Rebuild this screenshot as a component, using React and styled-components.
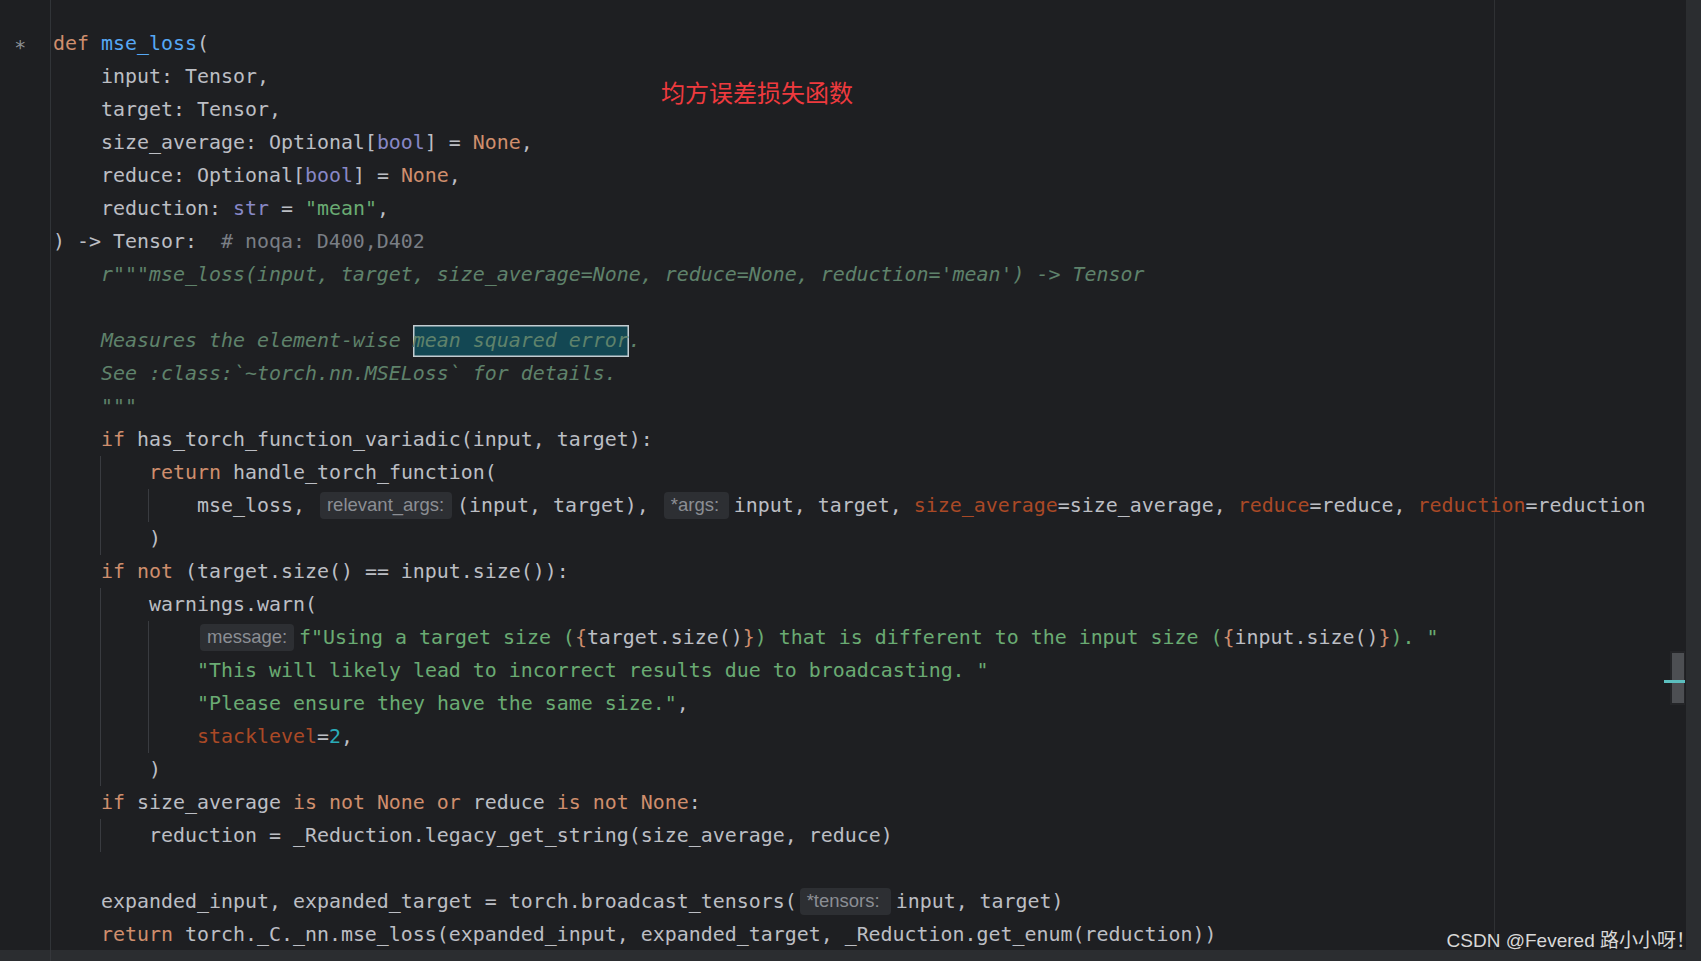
import styled, { createGlobalStyle } from 'styled-components';

const palette = {
  text: '#bcbec4',
  kw: '#cf8e6d',
  fn: '#56a8f5',
  str: '#6aab73',
  cm: '#7a7e85',
  doc: '#5f826b',
  bi: '#8888c6',
  prm: '#aa4926',
  num: '#2aacb8'
};

const CHAR = 12;

// token helpers
const t = (s, k = 'text') => ({ s, k });
const inlay = (label, w) => ({ inlay: label, w });
const L = (indent, ...tokens) => ({ type: 'line', indent, tokens });
const B = (col, ...items) => ({ type: 'block', col, items });

const code = [
  L(0, t('def', 'kw'), t(' '), t('mse_loss', 'fn'), t('(')),
  L(4, t('input: Tensor,')),
  L(4, t('target: Tensor,')),
  L(4, t('size_average: Optional['), t('bool', 'bi'), t('] = '), t('None', 'kw'), t(',')),
  L(4, t('reduce: Optional['), t('bool', 'bi'), t('] = '), t('None', 'kw'), t(',')),
  L(4, t('reduction: '), t('str', 'bi'), t(' = '), t('"mean"', 'str'), t(',')),
  L(0, t(') -> Tensor:  '), t('# noqa: D400,D402', 'cm')),
  L(4, t(`r"""mse_loss(input, target, size_average=None, reduce=None, reduction='mean') -> Tensor`, 'doc')),
  L(4),
  L(4, t('Measures the element-wise ', 'doc'), { hl: 'mean squared error' }, t('.', 'doc')),
  L(4, t('See :class:`~torch.nn.MSELoss` for details.', 'doc')),
  L(4, t('"""', 'doc')),
  L(4, t('if', 'kw'), t(' has_torch_function_variadic(input, target):')),
  B(4,
    L(8, t('return', 'kw'), t(' handle_torch_function(')),
    B(8,
      L(12,
        t('mse_loss, '),
        inlay('relevant_args:', 132),
        t('(input, target), '),
        inlay('*args:', 65),
        t('input, target, '),
        t('size_average', 'prm'), t('=size_average, '),
        t('reduce', 'prm'), t('=reduce, '),
        t('reduction', 'prm'), t('=reduction')
      )
    ),
    L(8, t(')'))
  ),
  L(4, t('if', 'kw'), t(' '), t('not', 'kw'), t(' (target.size() == input.size()):')),
  B(4,
    L(8, t('warnings.warn(')),
    B(8,
      L(12,
        inlay('message:', 94),
        t('f"Using a target size (', 'str'), t('{', 'kw'), t('target.size()'), t('}', 'kw'),
        t(') that is different to the input size (', 'str'), t('{', 'kw'), t('input.size()'), t('}', 'kw'),
        t('). "', 'str')
      ),
      L(12, t('"This will likely lead to incorrect results due to broadcasting. "', 'str')),
      L(12, t('"Please ensure they have the same size."', 'str'), t(',')),
      L(12, t('stacklevel', 'prm'), t('='), t('2', 'num'), t(','))
    ),
    L(8, t(')'))
  ),
  L(4,
    t('if', 'kw'), t(' size_average '), t('is not None', 'kw'), t(' '), t('or', 'kw'),
    t(' reduce '), t('is not None', 'kw'), t(':')
  ),
  B(4,
    L(8, t('reduction = _Reduction.legacy_get_string(size_average, reduce)'))
  ),
  L(4),
  L(4, t('expanded_input, expanded_target = torch.broadcast_tensors('), inlay('*tensors:', 91), t('input, target)')),
  L(4, t('return', 'kw'), t(' torch._C._nn.mse_loss(expanded_input, expanded_target, _Reduction.get_enum(reduction))'))
];

function Token({ tok }) {
  if (tok.inlay) return <Inlay $w={tok.w}>{tok.inlay}</Inlay>;
  if (tok.hl) return <Highlight>{tok.hl}</Highlight>;
  return <Tk $kind={tok.k}>{tok.s}</Tk>;
}

function Items({ items, base }) {
  return items.map((item, i) => {
    if (item.type === 'block') {
      return (
        <Guide key={i} $offset={(item.col - base) * CHAR - 1}>
          <Items items={item.items} base={item.col} />
        </Guide>
      );
    }
    return (
      <Line key={i} $pad={(item.indent - base) * CHAR}>
        {item.tokens.map((tok, j) => <Token key={j} tok={tok} />)}
      </Line>
    );
  });
}

export default function App() {
  return (
    <>
      <GlobalStyle />
      <Window>
        <Main>
          <Gutter>
            <GutterRow>∗</GutterRow>
          </Gutter>
          <Editor>
            <MarginLine />
            <Items items={code} base={0} />
            <Scrollbar>
              <Thumb />
              <Marker />
            </Scrollbar>
          </Editor>
          <SideStrip />
        </Main>
        <BottomBar>
          <BarGutter />
        </BottomBar>
        <Note>均方误差损失函数</Note>
        <Watermark>CSDN @Fevered 路小小呀！</Watermark>
      </Window>
    </>
  );
}

const GlobalStyle = createGlobalStyle`
  html, body {
    margin: 0;
    padding: 0;
    background: #1e1f22;
    overflow: hidden;
  }
`;

const Window = styled.div`
  position: relative;
  width: 1701px;
  height: 961px;
  display: flex;
  flex-direction: column;
  background: #1e1f22;
  overflow: hidden;
`;

const Main = styled.div`
  display: flex;
  height: 950px;
  overflow: hidden;
`;

const Gutter = styled.div`
  width: 50px;
  flex-shrink: 0;
  padding-top: 27px;
  border-right: 1px solid #313438;
`;

const GutterRow = styled.div`
  height: 33px;
  display: flex;
  align-items: center;
  padding-left: 14px;
  color: #8c8f94;
  font-family: "DejaVu Sans Mono", monospace;
  font-size: 20px;
`;

const Editor = styled.div`
  position: relative;
  z-index: 0;
  flex: 1;
  padding: 27px 0 0 2px;
  font-family: "DejaVu Sans Mono", "Liberation Mono", monospace;
  font-size: 19.93px;
  line-height: 33px;
  color: ${palette.text};
`;

const MarginLine = styled.div`
  position: absolute;
  z-index: -1;
  top: 0;
  bottom: 0;
  left: 1443px;
  width: 1px;
  background: #2f3134;
`;

const Line = styled.div`
  display: flex;
  align-items: center;
  height: 33px;
  padding-left: ${(p) => p.$pad}px;
  white-space: pre;
`;

const Guide = styled.div`
  margin-left: ${(p) => p.$offset}px;
  border-left: 1px solid #393b40;
`;

const Tk = styled.span`
  white-space: pre;
  color: ${(p) => palette[p.$kind]};
  font-style: ${(p) => (p.$kind === 'doc' ? 'italic' : 'normal')};
`;

const Highlight = styled.span`
  white-space: pre;
  height: 32px;
  line-height: 32px;
  color: ${palette.doc};
  font-style: italic;
  background: #134753;
  box-shadow: inset 0 0 0 1.5px #c3ccd1;
`;

const Inlay = styled.span`
  display: inline-flex;
  align-items: center;
  box-sizing: border-box;
  width: ${(p) => p.$w}px;
  height: 27px;
  margin: 0 5px 0 3px;
  padding: 0 7px;
  border-radius: 4px;
  background: #2d2f33;
  color: #8b8e94;
  font-family: "Liberation Sans", Arial, sans-serif;
  font-size: 18.5px;
  line-height: 1;
  white-space: nowrap;
`;

const Scrollbar = styled.div`
  position: absolute;
  left: 1619px;
  top: 651px;
  width: 15px;
  height: 54px;
  background: #242528;
`;

const Thumb = styled.div`
  position: absolute;
  left: 2px;
  top: 2px;
  width: 12px;
  height: 50px;
  background: #4d4f53;
`;

const Marker = styled.div`
  position: absolute;
  left: -6px;
  top: 29px;
  width: 21px;
  height: 3px;
  background: #5cbfbf;
`;

const SideStrip = styled.div`
  width: 15px;
  flex-shrink: 0;
  background: #2b2d30;
`;

const BottomBar = styled.div`
  height: 11px;
  display: flex;
  background: #2b2d30;
`;

const BarGutter = styled.div`
  width: 50px;
  border-right: 1px solid #35373b;
`;

const Note = styled.div`
  position: absolute;
  left: 661px;
  top: 80px;
  font-family: "Noto Sans CJK SC", sans-serif;
  font-size: 24px;
  line-height: 1;
  color: #ee3a3e;
`;

const Watermark = styled.div`
  position: absolute;
  right: 6px;
  top: 931px;
  font-family: "Liberation Sans", "Noto Sans CJK SC", sans-serif;
  font-size: 19px;
  line-height: 20px;
  color: #d8d8d8;
  white-space: nowrap;
`;
